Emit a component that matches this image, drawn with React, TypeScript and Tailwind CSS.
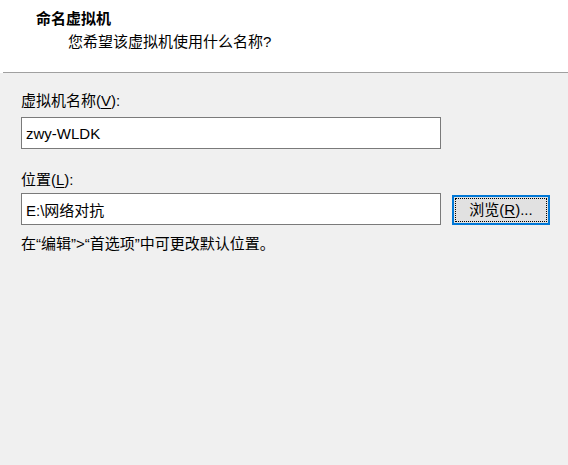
export default function App() {
  const font = 'font-["Liberation_Sans","Noto_Sans_CJK_SC",sans-serif]';

  return (
    <main className={`w-[568px] h-[465px] flex flex-col bg-[#f0f0f0] text-black text-[15px] ${font}`}>
      {/* header */}
      <header className="h-[72px] bg-white flex flex-col">
        <h1 className="pl-[36px] pt-[9px] font-bold leading-[20px]">命名虚拟机</h1>
        <p className="pl-[68px] mt-[3px] leading-[20px]">您希望该虚拟机使用什么名称?</p>
      </header>
      <div className="flex h-px bg-white">
        <div className="w-[3px]" />
        <div className="flex-1 bg-[#a0a0a0]" />
      </div>

      <section className="flex flex-col pl-[21px] pt-[18px]">
        <label htmlFor="vmname" className="leading-[20px] mb-[6px]">
          虚拟机名称(<span className="underline underline-offset-2">V</span>):
        </label>
        <input
          id="vmname"
          readOnly
          value="zwy-WLDK"
          className="w-[420px] h-[32px] bg-white border border-[#7a7a7a] pl-[4px] outline-none text-[15px] leading-[20px]"
        />

        <label htmlFor="location" className="leading-[20px] mt-[21px] mb-[3px]">
          位置(<span className="underline underline-offset-2">L</span>):
        </label>
        <div className="flex items-center gap-[11px]">
          <input
            id="location"
            readOnly
            value="E:\网络对抗"
            className="w-[420px] h-[32px] bg-white border border-[#7a7a7a] pl-[4px] outline-none text-[15px] leading-[20px]"
          />
          <button className="w-[98px] h-[30px] mt-[1px] bg-[#e1e1e1] border-2 border-[#0078d7] p-px flex">
            <span className="flex-1 flex items-center justify-center border border-dotted border-black leading-[20px]">
              浏览(<span className="underline underline-offset-2">R</span>)...
            </span>
          </button>
        </div>

        <p className="mt-[9px] leading-[20px]">在“编辑”&gt;“首选项”中可更改默认位置。</p>
      </section>
    </main>
  );
}
